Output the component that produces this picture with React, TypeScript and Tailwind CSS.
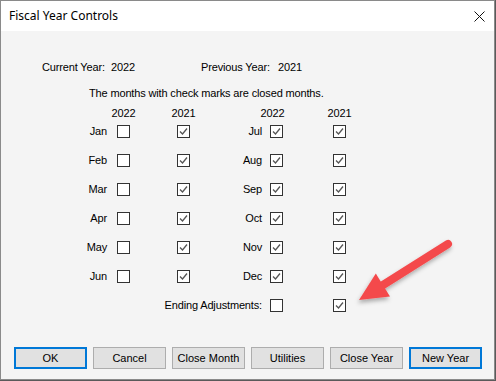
import React from 'react';

const months: [string, boolean, boolean, string, boolean, boolean][] = [
  ['Jan', false, true, 'Jul', true, true],
  ['Feb', false, true, 'Aug', true, true],
  ['Mar', false, true, 'Sep', true, true],
  ['Apr', false, true, 'Oct', true, true],
  ['May', false, true, 'Nov', true, true],
  ['Jun', false, true, 'Dec', true, true],
];

const Check: React.FC<{ on: boolean }> = ({ on }) => (
  <div className="w-[13px] h-[13px] border border-[#333333] bg-white flex items-center justify-center">
    {on && (
      <svg width="11" height="11" viewBox="0 0 11 11">
        <polyline points="2,5.5 4.5,8 9,2.5" fill="none" stroke="#555555" strokeWidth="1.3" />
      </svg>
    )}
  </div>
);

const Btn: React.FC<{ label: string; focus?: boolean }> = ({ label, focus }) => (
  <button
    className={`w-[73px] h-[22px] bg-[#e1e1e1] text-[11px] text-black flex items-center justify-center ${
      focus ? 'border-2 border-[#0078d7]' : 'border border-[#adadad]'
    }`}
  >
    {label}
  </button>
);

const App: React.FC = () => {
  return (
    <div className="w-[496px] h-[381px] bg-[#5a5a5a] flex" style={{ fontFamily: '"Liberation Sans", Arial, sans-serif' }}>
      <div className="w-[495px] h-[380px] border border-[#8a8a8a] bg-[#f4f4f4] flex flex-col relative">
        {/* Title bar */}
        <div className="h-[30px] bg-white flex items-center justify-between pl-[8px] pr-[9px] shrink-0">
          <span className="text-[12px] text-black" style={{ fontFamily: '"Noto Sans", "Open Sans", sans-serif' }}>
            Fiscal Year Controls
          </span>
          <svg width="11" height="11" viewBox="0 0 11 11">
            <path d="M0.5 0.5 L10.5 10.5 M10.5 0.5 L0.5 10.5" stroke="#111111" strokeWidth="1" />
          </svg>
        </div>

        {/* Body */}
        <div className="flex-1 flex flex-col text-[11px] leading-[13px] text-black tracking-[-0.15px]">
          <div className="flex pl-[41px] mt-[30px]">
            <span className="w-[69px]">Current Year:</span>
            <span className="w-[90px]">2022</span>
            <span className="w-[77px]">Previous Year:</span>
            <span>2021</span>
          </div>
          <div className="pl-[88px] mt-[13px]">The months with check marks are closed months.</div>

          <div className="grid grid-cols-[116px_60px_63px_30px_63px_40px] gap-y-[16px] mt-[7px]">
            {/* header row */}
            <div />
            <div className="w-[13px] flex justify-center">2022</div>
            <div className="w-[13px] flex justify-center">2021</div>
            <div />
            <div className="w-[13px] flex justify-center -ml-[4px]">2022</div>
            <div className="w-[13px] flex justify-center">2021</div>

            {months.map(([l, a, b, r, c, d], i) => (
              <React.Fragment key={l}>
                <div className={`text-right pr-[10px] ${i === 0 ? '-mt-[11px]' : ''}`}>{l}</div>
                <div className={i === 0 ? '-mt-[11px]' : ''}><Check on={a} /></div>
                <div className={i === 0 ? '-mt-[11px]' : ''}><Check on={b} /></div>
                <div className={`text-right pr-[8px] ${i === 0 ? '-mt-[11px]' : ''}`}>{r}</div>
                <div className={i === 0 ? '-mt-[11px]' : ''}><Check on={c} /></div>
                <div className={i === 0 ? '-mt-[11px]' : ''}><Check on={d} /></div>
              </React.Fragment>
            ))}

            <div className="col-span-4 text-right pr-[8px]">Ending Adjustments:</div>
            <div><Check on={false} /></div>
            <div><Check on={true} /></div>
          </div>

          <div className="flex gap-[6px] pl-[13px] mt-[35px] tracking-normal">
            <Btn label="OK" focus />
            <Btn label="Cancel" />
            <Btn label="Close Month" />
            <Btn label="Utilities" />
            <Btn label="Close Year" />
            <Btn label="New Year" focus />
          </div>
        </div>

        {/* Annotation arrow */}
        <svg className="absolute left-[339px] top-[224px] pointer-events-none" width="130" height="95" viewBox="339 224 130 95">
          <defs>
            <filter id="sh" x="-20%" y="-20%" width="140%" height="150%">
              <feDropShadow dx="-1" dy="3" stdDeviation="2" floodColor="#000000" floodOpacity="0.3" />
            </filter>
          </defs>
          <g filter="url(#sh)">
            <line x1="447" y1="243" x2="382" y2="284" stroke="#f44a4c" strokeWidth="8" strokeLinecap="round" />
            <polygon points="358,299 374.8,272.5 389,295.5" fill="#f44a4c" />
          </g>
        </svg>
      </div>
    </div>
  );
};

export default App;
